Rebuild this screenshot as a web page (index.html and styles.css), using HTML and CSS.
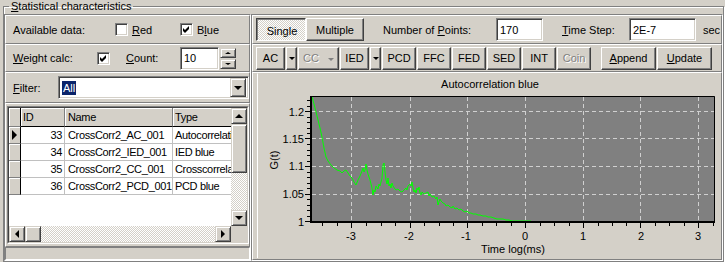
FILE: index.html
```html
<!DOCTYPE html>
<html lang="en">
<head>
  <meta charset="UTF-8" />
  <title>Statistical characteristics</title>
  <link rel="stylesheet" href="styles.css">
</head>
<body>
  <fieldset class="group">
    <legend><u>S</u>tatistical characteristics</legend>
    <div class="group-body">

      <div class="left">
        <div class="panel row row-data">
          <span class="lbl w-avail">Available data:</span>
          <span class="check-item w-red"><span class="check"></span><span><u>R</u>ed</span></span>
          <span class="check-item"><span class="check"><svg viewBox="0 0 9 9" width="9" height="9"><polygon points="1,3 3,5 7,1 7,4 3,8 1,6" fill="#000"/></svg></span><span>B<u>l</u>ue</span></span>
        </div>

        <div class="panel row row-weight">
          <span class="lbl w-weight"><u>W</u>eight calc:</span>
          <span class="check"><svg viewBox="0 0 9 9" width="9" height="9"><polygon points="1,3 3,5 7,1 7,4 3,8 1,6" fill="#000"/></svg></span>
          <span class="lbl w-count"><u>C</u>ount:</span>
          <span class="field w-countfield">10</span>
          <span class="spin">
            <span class="sbtn spin-up"></span>
            <span class="sbtn spin-down"></span>
          </span>
        </div>

        <div class="panel row row-filter">
          <span class="lbl w-filter"><u>F</u>ilter:</span>
          <span class="combo">
            <span class="combo-text"><span class="selected">All</span></span>
            <span class="sbtn down combo-btn"></span>
          </span>
        </div>

        <div class="panel grid-panel">
          <div class="grid">
            <div class="grid-inner">
              <div class="grid-body">
                <div class="cells">
                  <div class="grid-row head">
                    <span class="ind"></span><span>ID</span><span>Name</span><span>Type</span>
                  </div>
                  <div class="grid-row">
                    <span class="ind current"></span><span class="num">33</span><span>CrossCorr2_AC_001</span><span>Autocorrelation blue</span>
                  </div>
                  <div class="grid-row">
                    <span class="ind"></span><span class="num">34</span><span>CrossCorr2_IED_001</span><span>IED blue</span>
                  </div>
                  <div class="grid-row">
                    <span class="ind"></span><span class="num">35</span><span>CrossCorr2_CC_001</span><span>Crosscorrelation</span>
                  </div>
                  <div class="grid-row">
                    <span class="ind"></span><span class="num">36</span><span>CrossCorr2_PCD_001</span><span>PCD blue</span>
                  </div>
                </div>
                <div class="vscroll">
                  <span class="sbtn up"></span>
                  <span class="sbtn thumb-v"></span>
                  <span class="track"></span>
                  <span class="sbtn down"></span>
                </div>
              </div>
              <div class="hscroll">
                <span class="sbtn left-arrow"></span>
                <span class="sbtn thumb-h"></span>
                <span class="track"></span>
                <span class="sbtn right-arrow"></span>
                <span class="corner"></span>
              </div>
            </div>
          </div>
        </div>

        <div class="status"></div>
      </div>

      <div class="right">
        <div class="panel row row-mode">
          <button class="btn pressed w-single">Single</button>
          <button class="btn w-multiple">Multiple</button>
          <span class="lbl w-points">Number of <u>P</u>oints:</span>
          <span class="field w-pointsfield">170</span>
          <span class="lbl w-step"><u>T</u>ime Step:</span>
          <span class="field w-stepfield">2E-7</span>
          <span class="lbl unit">sec</span>
        </div>

        <div class="panel row row-tools">
          <button class="btn w-ac">AC</button>
          <button class="btn drop"></button>
          <button class="btn disabled w-cc">CC <span class="drop-mark"></span></button>
          <button class="btn w-ied">IED</button>
          <button class="btn drop"></button>
          <button class="btn w-tool">PCD</button>
          <button class="btn w-tool">FFC</button>
          <button class="btn w-tool">FED</button>
          <button class="btn w-tool">SED</button>
          <button class="btn w-tool">INT</button>
          <button class="btn disabled w-tool">Coin</button>
          <button class="btn w-wide push"><u>A</u>ppend</button>
          <button class="btn w-wide"><u>U</u>pdate</button>
        </div>

        <div class="panel chart-panel">
          <svg class="chart" width="468" height="186" viewBox="253 73 468 186">
            <path d="M257.5 73.5V258" stroke="#fff"/>
            <text x="490" y="88" text-anchor="middle">Autocorrelation blue</text>

            <rect x="311" y="96" width="404" height="126" fill="#808080"/>
            <g stroke="#d0d0d0" stroke-dasharray="4 3">
              <path d="M351.5 97V221M410.5 97V221M467.5 97V221M525.5 97V221M583.5 97V221M640.5 97V221M698.5 97V221"/>
              <path d="M312 111.5H714M312 138.5H714M312 166.5H714M312 194.5H714"/>
            </g>

            <polyline fill="none" stroke="#00ff00" points="312,97 314,104 316,112 318,120 320,128 322,137 324,148 326,157 328,161 331,165 334,168 337,170 340,171 342,173 344,171 346,170 348,173 350,176 352,178 354,182 356,185 358,180 360,176 362,171 363,168 364,172 365,170 366,164 367,170 368,174 370,180 371,184 372,188 373,195 374,190 375,192 376,186 378,189 379,184 380,186 382,178 383,165 384,163 385,172 386,180 387,184 388,178 389,186 390,184 391,188 392,183 393,186 395,189 396,190 398,189 400,191 402,192 404,190 406,188 407,190 408,186 410,184 411,186 412,182 413,188 414,192 415,190 416,193 417,188 418,190 419,187 420,193 421,195 422,192 424,194 426,193 428,192 429,196 430,194 432,197 434,196 436,199 437,197 438,205 439,202 440,199 441,201 443,203 445,204 446,206 448,205 450,207 452,208 453,206 455,209 457,208 459,210 461,209 463,211 465,212 467,211 469,213 471,213 473,214 476,214 478,215 480,215 483,216 486,216 488,217 491,217 494,218 497,219 500,219 503,219 506,220 509,220 512,221 518,221 524,221 531,221"/>

            <g stroke="#000" fill="none">
              <path d="M311 96.5H714.5V222"/>
              <path d="M311 96V223" stroke-width="2"/>
              <path d="M310 222H715" stroke-width="2"/>
              <path d="M305 111.5H310M305 138.5H310M305 166.5H310M305 194.5H310M305 221.5H310"/>
              <path d="M307 100.5H310M307 106.5H310M307 117.5H310M307 122.5H310M307 128.5H310M307 133.5H310M307 144.5H310M307 150.5H310M307 155.5H310M307 161.5H310M307 172.5H310M307 177.5H310M307 183.5H310M307 188.5H310M307 199.5H310M307 205.5H310M307 210.5H310M307 216.5H310"/>
              <path d="M351.5 223V228M410.5 223V228M467.5 223V228M525.5 223V228M583.5 223V228M640.5 223V228M698.5 223V228"/>
              <path d="M322.5 223V226M337.5 223V226M366.5 223V226M381.5 223V226M395.5 223V226M424.5 223V226M439.5 223V226M453.5 223V226M482.5 223V226M496.5 223V226M511.5 223V226M540.5 223V226M554.5 223V226M569.5 223V226M598.5 223V226M612.5 223V226M626.5 223V226M655.5 223V226M669.5 223V226M684.5 223V226M713.5 223V226"/>
            </g>

            <g text-anchor="end">
              <text x="304" y="116">1.2</text>
              <text x="304" y="143">1.15</text>
              <text x="304" y="170">1.1</text>
              <text x="304" y="198">1.05</text>
              <text x="304" y="226">1</text>
            </g>
            <g text-anchor="middle">
              <text x="351" y="240">-3</text>
              <text x="409" y="240">-2</text>
              <text x="466" y="240">-1</text>
              <text x="525" y="240">0</text>
              <text x="583" y="240">1</text>
              <text x="641" y="240">2</text>
              <text x="698" y="240">3</text>
              <text x="513" y="253">Time log(ms)</text>
              <text transform="translate(278 160) rotate(-90)">G(t)</text>
            </g>
          </svg>
        </div>
      </div>

    </div>
  </fieldset>
</body>
</html>
```

FILE: styles.css
```css
body {
  margin: 0;
  width: 725px;
  height: 262px;
  overflow: hidden;
  background: #d4d0c8;
  font-family: "Liberation Sans", Arial, sans-serif;
  font-size: 11px;
  color: #000;
}

/* group box with etched frame */
.group {
  margin: 0 1px 0 3px;
  padding: 1px 0 0;
  border: 1px solid #808080;
  box-shadow: inset 1px 1px #fff, 1px 1px #fff;
  min-inline-size: 0;
}

.group legend {
  margin-left: 5px;
  padding: 0 2px;
  line-height: 13px;
}

.group-body {
  display: flex;
}

.left,
.right {
  display: flex;
  flex-direction: column;
  border: 1px solid;
  border-color: #808080 #fff #fff #808080;
}

.left {
  width: 245px;
}

.right {
  flex: 1;
}

/* raised panel */
.panel {
  border: 1px solid;
  border-color: #fff #808080 #808080 #fff;
}

.row {
  display: flex;
  align-items: center;
}

.row-data {
  height: 27px;
  padding-left: 7px;
}

.row-weight {
  height: 26px;
  padding-left: 7px;
}

.row-filter {
  height: 29px;
  padding-left: 7px;
}

.row-mode {
  height: 27px;
  padding-left: 3px;
}

.row-tools {
  height: 26px;
  padding-left: 3px;
  gap: 1px;
}

.lbl {
  display: inline-block;
  white-space: nowrap;
}

.w-avail { width: 102px; }
.w-weight { width: 84px; }
.w-count { width: 54px; margin-left: 16px; }
.w-filter { width: 45px; }
.w-points { width: 113px; margin-left: 19px; }
.w-step { width: 67px; margin-left: 19px; }
.unit { margin-left: 7px; }

.check-item {
  display: flex;
  align-items: center;
  gap: 4px;
}

.w-red { width: 65px; }

/* sunken boxes */
.check,
.field,
.combo {
  box-sizing: border-box;
  border: 1px solid;
  border-color: #808080 #fff #fff #808080;
  box-shadow: inset 1px 1px #404040, inset -1px -1px #d4d0c8;
  background: #fff;
}

.check {
  display: flex;
  align-items: center;
  justify-content: center;
  width: 13px;
  height: 13px;
}

.field {
  display: flex;
  align-items: center;
  height: 23px;
  padding-left: 3px;
}

.w-countfield { width: 39px; }
.w-pointsfield { width: 47px; }
.w-stepfield { width: 67px; }

.spin {
  display: flex;
  flex-direction: column;
  gap: 1px;
  margin-left: 1px;
}

.spin .sbtn {
  width: 16px;
  height: 10px;
}

/* raised scroll / spin buttons */
.sbtn {
  box-sizing: border-box;
  display: flex;
  align-items: center;
  justify-content: center;
  width: 16px;
  height: 16px;
  background: #d4d0c8;
  border: 1px solid;
  border-color: #d4d0c8 #404040 #404040 #d4d0c8;
  box-shadow: inset 1px 1px #fff, inset -1px -1px #808080;
}

.sbtn.up::after,
.sbtn.spin-up::after,
.sbtn.down::after,
.sbtn.spin-down::after,
.sbtn.left-arrow::after,
.sbtn.right-arrow::after {
  content: "";
  border: 4px solid transparent;
}

.sbtn.up::after { border-bottom-color: #000; border-top-width: 0; }
.sbtn.down::after { border-top-color: #000; border-bottom-width: 0; }
.sbtn.spin-up::after { border-width: 0 3px 2px; border-bottom-color: #000; }
.sbtn.spin-down::after { border-width: 2px 3px 0; border-top-color: #000; }
.sbtn.left-arrow::after { border-right-color: #000; border-left-width: 0; }
.sbtn.right-arrow::after { border-left-color: #000; border-right-width: 0; }

.combo {
  display: flex;
  align-items: center;
  width: 191px;
  height: 23px;
  padding: 2px;
}

.combo-text {
  flex: 1;
  padding-left: 1px;
}

.selected {
  background: #0a246a;
  color: #fff;
  padding: 1px 1px;
}

.combo-btn {
  height: 19px;
}

/* data grid */
.grid-panel {
  height: 142px;
}

.grid {
  width: 242px;
  height: 138px;
  margin: 2px 0 0 1px;
  box-sizing: border-box;
  border: 1px solid;
  border-color: #808080 #fff #fff #808080;
}

.grid-inner {
  height: 100%;
  box-sizing: border-box;
  border: 1px solid;
  border-color: #404040 #d4d0c8 #d4d0c8 #404040;
}

.grid-body {
  display: flex;
  height: 118px;
}

.cells {
  flex: 1;
  overflow: hidden;
  background: #fff;
  letter-spacing: -0.35px;
}

.grid-row {
  display: grid;
  grid-template-columns: 12px 44px 108px 80px;
  height: 17px;
}

.grid-row span {
  box-sizing: border-box;
  white-space: nowrap;
  overflow: hidden;
  padding: 0 2px;
  line-height: 16px;
  border-right: 1px solid #c0c0c0;
  border-bottom: 1px solid #c0c0c0;
}

.grid-row.head {
  height: 19px;
}

.grid-row.head span {
  line-height: 18px;
  background: #d4d0c8;
  border-right-color: #808080;
  border-bottom-color: #000;
  box-shadow: inset 1px 1px #fff;
}

.grid-row span.num {
  text-align: right;
}

.grid-row span:nth-child(3) {
  padding-left: 3px;
}

.grid-row span.ind {
  display: flex;
  align-items: center;
  justify-content: center;
  padding: 0;
  background: #d4d0c8;
  border-right-color: #000;
  border-bottom-color: #808080;
  box-shadow: inset 1px 1px #fff;
}

.ind.current::after {
  content: "";
  border-left: 5px solid #000;
  border-top: 5px solid transparent;
  border-bottom: 5px solid transparent;
}

.vscroll {
  display: flex;
  flex-direction: column;
  width: 16px;
}

.track {
  flex: 1;
  background: repeating-conic-gradient(#fff 0 25%, #d4d0c8 0 50%) 0 0 / 2px 2px;
}

.thumb-v {
  height: 49px;
}

.hscroll {
  display: flex;
  height: 16px;
}

.corner {
  width: 16px;
  background: #d4d0c8;
}

.status {
  height: 11px;
  border: 1px solid;
  border-color: #808080 #fff #fff #808080;
}

/* buttons */
.btn {
  box-sizing: border-box;
  height: 23px;
  padding: 0;
  font: inherit;
  color: #000;
  background: #d4d0c8;
  border: 1px solid;
  border-color: #fff #404040 #404040 #fff;
  box-shadow: inset -1px -1px #808080;
  white-space: nowrap;
}

.btn.pressed {
  border-color: #404040 #fff #fff #404040;
  box-shadow: inset 1px 1px #808080;
  background: repeating-conic-gradient(#fff 0 25%, #d4d0c8 0 50%) 0 0 / 2px 2px;
  padding: 2px 0 0 2px;
}

.btn.disabled {
  color: #808080;
  text-shadow: 1px 1px #fff;
}

.w-single { width: 50px; }
.w-multiple { width: 58px; }
.w-ac { width: 29px; }
.w-ied { width: 29px; }
.w-cc { width: 41px; }
.w-tool { width: 34px; }
.w-wide { width: 55px; }
.push { margin-left: 9px; }

.drop {
  width: 11px;
  display: flex;
  align-items: center;
  justify-content: center;
}

.drop::after,
.drop-mark {
  content: "";
  display: inline-block;
  border-top: 3px solid #000;
  border-left: 3px solid transparent;
  border-right: 3px solid transparent;
  vertical-align: middle;
}

.disabled .drop-mark {
  border-top-color: #808080;
  margin-left: 6px;
}

.chart-panel {
  flex: 1;
  overflow: hidden;
}

.chart {
  display: block;
  font-family: "Liberation Sans", Arial, sans-serif;
  font-size: 11px;
}
```
